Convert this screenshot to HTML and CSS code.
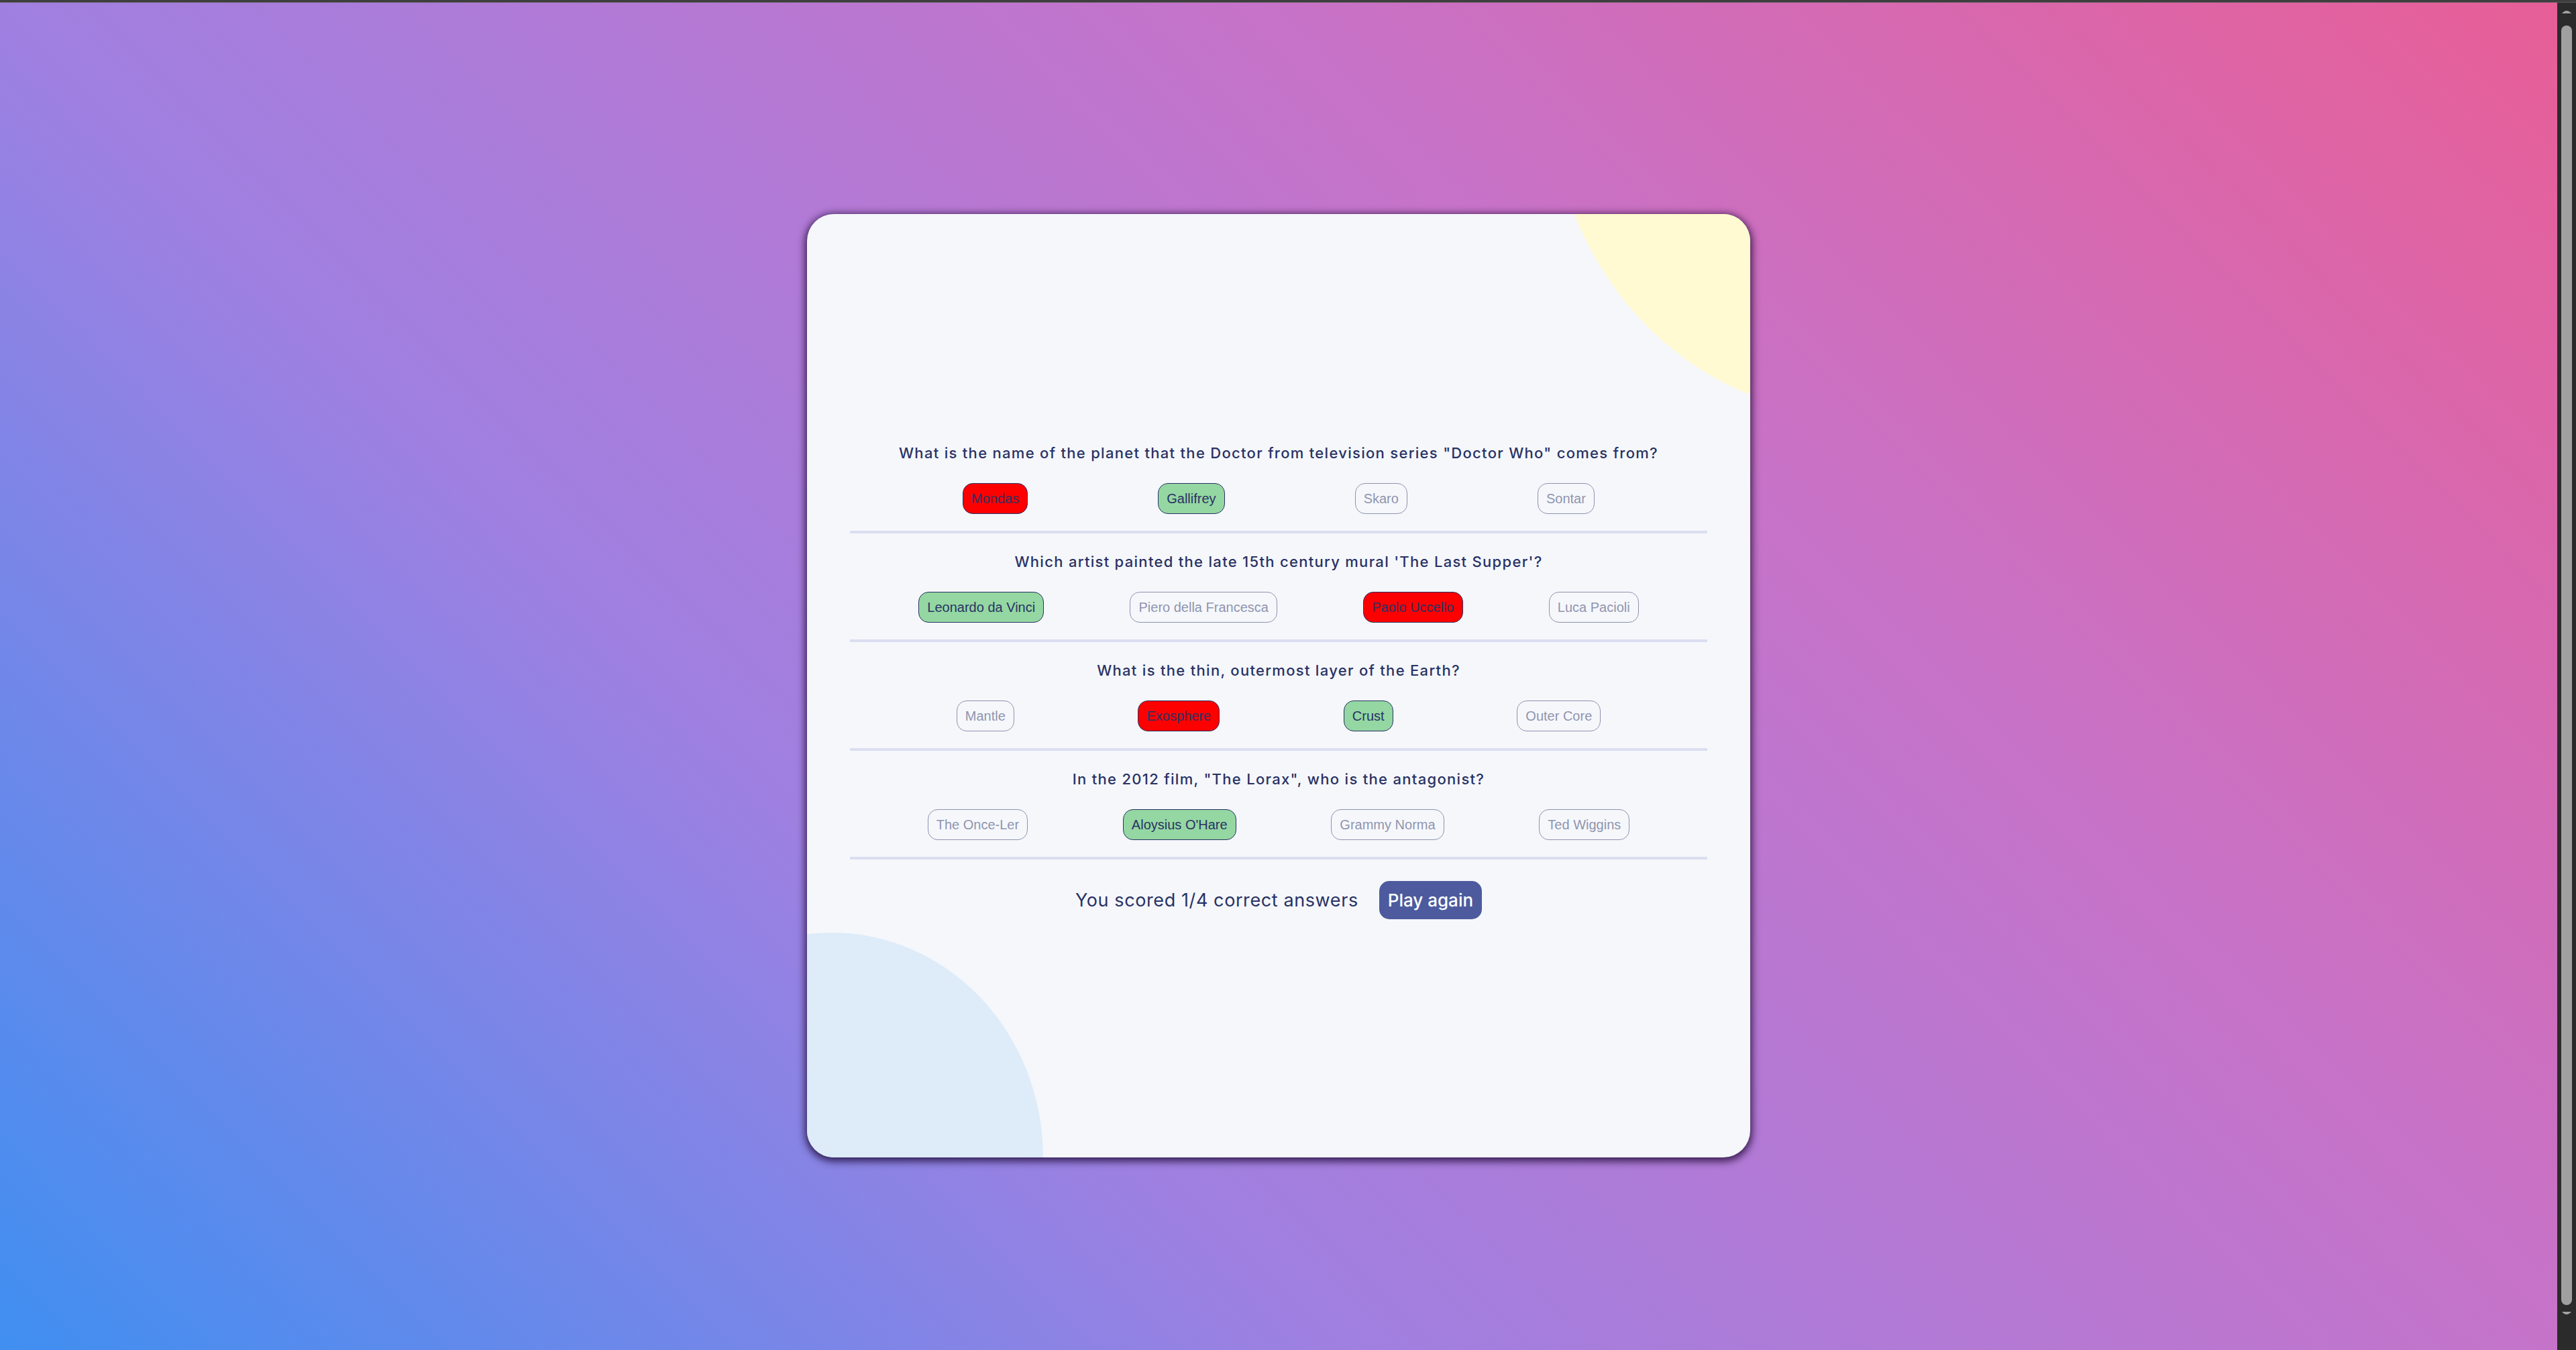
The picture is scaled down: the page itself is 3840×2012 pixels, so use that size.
FILE: index.html
```html
<!DOCTYPE html>
<html lang="en">
<head>
<meta charset="utf-8">
<title>Quizzical</title>
<link rel="stylesheet" href="styles.css">
</head>
<body>
<div class="topbar"></div>
<div class="screen">
  <main class="stage">
    <section class="card">
      <div class="blob blob-yellow"></div>
      <div class="blob blob-blue"></div>
      <div class="quiz">
        <div class="question">
          <h2 class="q-text">What is the name of the planet that the Doctor from television series &quot;Doctor Who&quot; comes from?</h2>
          <div class="answers">
            <button class="answer wrong">Mondas</button>
            <button class="answer correct">Gallifrey</button>
            <button class="answer faded">Skaro</button>
            <button class="answer faded">Sontar</button>
          </div>
          <div class="divider"></div>
        </div>
        <div class="question">
          <h2 class="q-text">Which artist painted the late 15th century mural &#039;The Last Supper&#039;?</h2>
          <div class="answers">
            <button class="answer correct">Leonardo da Vinci</button>
            <button class="answer faded">Piero della Francesca</button>
            <button class="answer wrong">Paolo Uccello</button>
            <button class="answer faded">Luca Pacioli</button>
          </div>
          <div class="divider"></div>
        </div>
        <div class="question">
          <h2 class="q-text">What is the thin, outermost layer of the Earth?</h2>
          <div class="answers">
            <button class="answer faded">Mantle</button>
            <button class="answer wrong">Exosphere</button>
            <button class="answer correct">Crust</button>
            <button class="answer faded">Outer Core</button>
          </div>
          <div class="divider"></div>
        </div>
        <div class="question">
          <h2 class="q-text">In the 2012 film, &quot;The Lorax&quot;, who is the antagonist?</h2>
          <div class="answers">
            <button class="answer faded">The Once-Ler</button>
            <button class="answer correct">Aloysius O&#039;Hare</button>
            <button class="answer faded">Grammy Norma</button>
            <button class="answer faded">Ted Wiggins</button>
          </div>
          <div class="divider"></div>
        </div>
        <div class="score-row">
          <p class="score-text">You scored 1/4 correct answers</p>
          <button class="play">Play again</button>
        </div>
      </div>
    </section>
  </main>
  <div class="scrollbar">
    <svg class="sb-arrow" width="16" height="7" viewBox="0 0 16 7"><path d="M1 7 Q8 -1 15 7 Z" fill="#a3a3a3"/></svg>
    <div class="sb-thumb"></div>
    <svg class="sb-arrow sb-down" width="16" height="7" viewBox="0 0 16 7"><path d="M1 0 Q8 8 15 0 Z" fill="#a3a3a3"/></svg>
  </div>
</div>
</body>
</html>
```

FILE: styles.css
```css
html, body {
  margin: 0;
  height: 100%;
  overflow: hidden;
}

body {
  background: linear-gradient(45deg, #3f8ff1 0%, #9f80e1 34%, #c673c9 66%, #e85e96 100%);
  font-family: "Inter", "Liberation Sans", sans-serif;
  color: #293264;
}

.topbar {
  height: 3px;
  background: #3e3e3e;
  border-bottom: 1px solid #5c5c5c;
}

.screen {
  display: flex;
  height: calc(100% - 4px);
}

.stage {
  flex: 1;
  display: flex;
  justify-content: center;
  align-items: flex-start;
  padding-top: 315px;
}

.card {
  position: relative;
  overflow: hidden;
  box-sizing: border-box;
  width: 1406px;
  height: 1406px;
  padding: 0 38px;
  border-radius: 40px;
  background: #f5f7fb;
  box-shadow: 0 3px 12px 3px rgba(20, 0, 40, 0.75);
}

.blob {
  position: absolute;
  border-radius: 50%;
}

.blob-yellow {
  left: 1106px;
  top: -696px;
  width: 904px;
  height: 994px;
  background: #fffad1;
}

.blob-blue {
  left: -278px;
  top: 1071px;
  width: 630px;
  height: 670px;
  background: #deebf8;
}

.quiz {
  position: relative;
  padding-top: 341px;
}

.question + .question {
  margin-top: 27px;
}

.q-text {
  margin: 0;
  font-size: 22px;
  line-height: 30px;
  font-weight: 500;
  letter-spacing: 1.3px;
  text-align: center;
  color: #293264;
}

.answers {
  display: flex;
  justify-content: space-evenly;
  margin-top: 30px;
}

.answer {
  font-family: "Liberation Sans", Arial, sans-serif;
  font-size: 20px;
  line-height: 24px;
  padding: 10px 12px;
  border: 1px solid #293264;
  border-radius: 15px;
  background: transparent;
  color: #293264;
}

.answer.correct {
  background: #94d7a2;
}

.answer.wrong {
  background: #ff0000;
}

.answer.faded {
  opacity: 0.5;
}

.divider {
  height: 4px;
  margin: 25px 26px 0;
  background: #dbdef0;
}

.score-row {
  display: flex;
  justify-content: center;
  align-items: center;
  gap: 31px;
  margin-top: 32px;
}

.score-text {
  margin: 0;
  font-size: 27px;
  font-weight: 400;
  letter-spacing: 0.6px;
  color: #293264;
}

.play {
  font-family: "Inter", "Liberation Sans", sans-serif;
  font-size: 26px;
  font-weight: 500;
  line-height: 33px;
  padding: 12px 13px;
  border: none;
  border-radius: 15px;
  background: #4d5b9e;
  color: #ffffff;
}

.scrollbar {
  width: 28px;
  background: #2b2b2b;
  display: flex;
  flex-direction: column;
  align-items: center;
  padding-top: 9px;
  box-sizing: border-box;
}

.sb-arrow {
  display: block;
}

.sb-thumb {
  width: 16px;
  height: 1907px;
  margin-top: 18px;
  margin-bottom: 10px;
  border-radius: 8px;
  background: #a0a0a0;
}
```
